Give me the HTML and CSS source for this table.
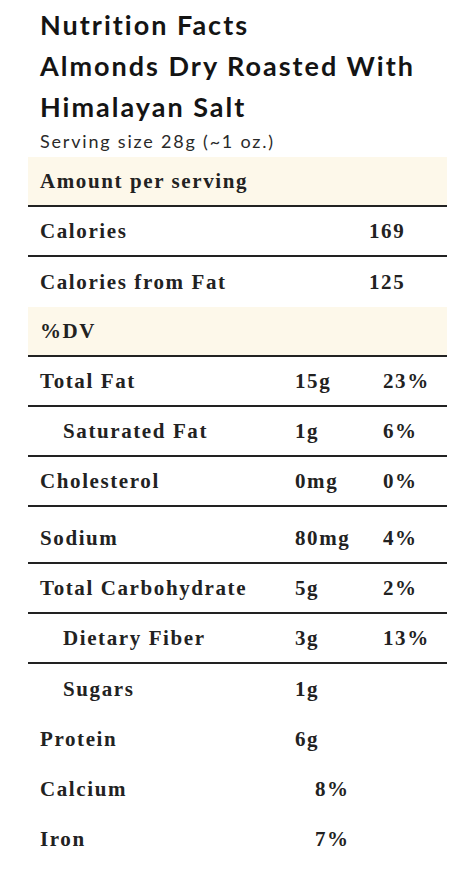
FILE: index.html
```html
<!DOCTYPE html>
<html lang="en">

<head>
  <meta charset="UTF-8">
  <meta name="viewport" content="width=device-width, initial-scale=1.0">
  <title>Nutrition Facts | Almonds Dry Roasted With Himalayan Salt</title>
  <link rel="stylesheet" href="styles.css">
</head>

<body>
  <!-- Heading -->
  <div class="heading">
    <h1>Nutrition Facts<br>Almonds Dry Roasted With<br>Himalayan Salt</h1>
    <p class="serving">Serving size 28g (~1 oz.)</p>
  </div>

  <!-- Facts table -->
  <div class="facts">
    <div class="row band line"><span>Amount per serving</span></div>
    <div class="row wide line"><span>Calories</span><span>169</span></div>
    <div class="row wide"><span>Calories from Fat</span><span>125</span></div>
    <div class="row band line"><span>%DV</span></div>
    <div class="row line"><span>Total Fat</span><span>15g</span><span>23%</span></div>
    <div class="row line sub"><span>Saturated Fat</span><span>1g</span><span>6%</span></div>
    <div class="row line"><span>Cholesterol</span><span>0mg</span><span>0%</span></div>
    <div class="row line tall"><span>Sodium</span><span>80mg</span><span>4%</span></div>
    <div class="row line"><span>Total Carbohydrate</span><span>5g</span><span>2%</span></div>
    <div class="row line sub"><span>Dietary Fiber</span><span>3g</span><span>13%</span></div>
    <div class="row sub"><span>Sugars</span><span>1g</span></div>
    <div class="row"><span>Protein</span><span>6g</span></div>
    <div class="row mid"><span>Calcium</span><span>8%</span></div>
    <div class="row mid"><span>Iron</span><span>7%</span></div>
  </div>
</body>

</html>
```

FILE: styles.css
```css
body {
  margin: 0;
  background: white;
  color: #1c1c1c;
}

.heading {
  padding: 4px 0 0 40px;
  font-family: Lato, "Open Sans", sans-serif;
}

h1 {
  margin: 0;
  font-size: 27px;
  line-height: 41px;
  letter-spacing: 2px;
  font-weight: bold;
  color: #141414;
}

.serving {
  margin: 0;
  font-size: 18px;
  line-height: 28px;
  letter-spacing: 1.8px;
  color: #2a2a2a;
}

.facts {
  margin: 2px 16px 0 28px;
  font-family: "Liberation Serif", "Times New Roman", serif;
  font-size: 21px;
  font-weight: bold;
  letter-spacing: 1.6px;
  color: #222;
}

.row {
  display: grid;
  grid-template-columns: 255px 88px 1fr;
  align-items: center;
  height: 50px;
  padding-left: 12px;
  box-sizing: border-box;
}

.line {
  border-bottom: 2px solid #222;
}

.band {
  background-color: #fdf8ea;
}

.sub span:first-child {
  padding-left: 23px;
}

.wide {
  grid-template-columns: 329px 1fr;
}

.mid {
  grid-template-columns: 275px 1fr;
}

.tall {
  height: 57px;
  padding-top: 8px;
}
```
